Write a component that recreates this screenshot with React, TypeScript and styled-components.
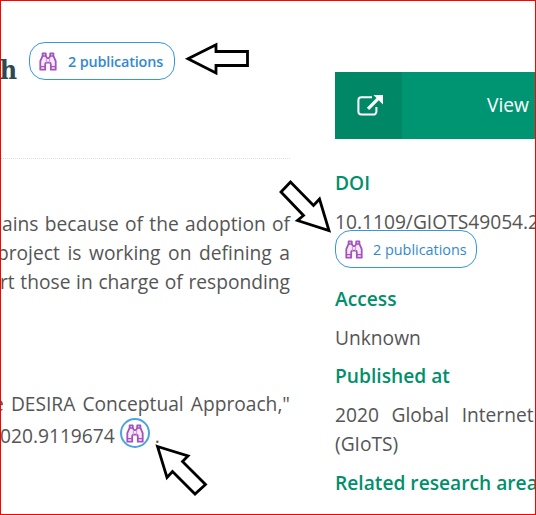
import React from "react";
import styled, { createGlobalStyle } from "styled-components";

const GlobalStyle = createGlobalStyle`
  *, *::before, *::after { box-sizing: border-box; }
  body { margin: 0; background: #fff; }
`;

const Frame = styled.div`
  position: relative;
  width: 536px;
  height: 515px;
  border: 1px solid #ff0000;
  overflow: hidden;
  display: grid;
  grid-template-columns: 289px 300px;
  column-gap: 45px;
  background: #fff;
  color: #555;
  font-family: "Open Sans", sans-serif;
  font-size: 19.2px;
  line-height: 29px;
`;

const Main = styled.main`
  min-width: 0;
`;

const TitleRow = styled.header`
  display: flex;
  align-items: flex-start;
  height: 157px;
  padding-top: 41px;
`;

const Title = styled.h1`
  display: flex;
  justify-content: flex-end;
  width: 16px;
  margin: 13px 12px 0 0;
  color: #2f4a4f;
  font: bold 26.5px/29px "DejaVu Serif Condensed", "DejaVu Serif", serif;
  font-stretch: semi-condensed;
`;

const Divider = styled.div`
  height: 1px;
  background: repeating-linear-gradient(90deg, #ddd 0 1px, #fff 1px 2px);
`;

const Line = styled.div<{ $bleed?: number }>`
  margin-left: ${(p) => -(p.$bleed ?? 0)}px;
  text-align: justify;
  text-align-last: justify;
  white-space: nowrap;
`;

const Abstract = styled.section`
  margin-top: 50px;
`;

const Citation = styled.section`
  margin-top: 93px;
`;

const CitationEnd = styled.div`
  display: flex;
  align-items: flex-start;
  margin-left: -1px;
  padding-top: 3px;
`;

const Chip = styled.span<{ $width: number; $strong?: boolean }>`
  display: inline-flex;
  align-items: center;
  flex: none;
  width: ${(p) => p.$width}px;
  height: 38px;
  padding-left: 9px;
  gap: ${(p) => (p.$strong ? 11 : 10)}px;
  border: 1px solid #3498db;
  border-radius: 16px;
  background: #fff;
  color: #3489ce;
  font-size: 14.4px;
  font-weight: ${(p) => (p.$strong ? 550 : 400)};
  letter-spacing: ${(p) => (p.$strong ? "-0.15px" : "0")};
  line-height: 20px;
  white-space: nowrap;
`;

const ChipText = styled.span`
  padding-top: 2px;
`;

const RoundBadge = styled.span`
  display: flex;
  align-items: center;
  justify-content: center;
  width: 30px;
  height: 30px;
  margin: -3px 5px 0 5px;
  border: 2px solid #4ba3df;
  border-radius: 50%;
  background: #fff;
`;

const Side = styled.aside`
  padding-top: 71px;
`;

const ViewButton = styled.div`
  display: flex;
  height: 67px;
  background: #009572;
  color: #fff;
  line-height: 66px;
`;

const ButtonIcon = styled.span`
  display: flex;
  align-items: center;
  justify-content: center;
  width: 67px;
  padding: 0 0 2px 2px;
  background: #008766;
`;

const ButtonLabel = styled.span`
  padding-left: 85px;
`;

const Label = styled.h2<{ $top: number }>`
  margin: ${(p) => p.$top}px 0 0;
  color: #008f6b;
  font-size: 19.2px;
  font-weight: 600;
  line-height: 29px;
  white-space: nowrap;
`;

const Value = styled.p`
  margin: 10px 0 0;
  white-space: nowrap;
`;

const Doi = styled(Value)`
  height: 48px;
`;

const DoiChip = styled.span`
  display: flex;
  margin-top: -6px;
`;

const Venue = styled(Value)`
  word-spacing: 7.6px;
`;

const Annotations = styled.svg`
  position: absolute;
  left: -1px;
  top: -1px;
  pointer-events: none;
`;

const Binoculars = () => (
  <svg width="18" height="19" viewBox="0 0 18 19" fill="none" stroke="#a552bd" strokeWidth="1.8" strokeLinejoin="round">
    <path
      d="M3.6 1.4h3.2v2.4L8 6.2h2l1.2-2.4V1.4h3.2v2.4l2.3 5.4v8.5h-4.9v-5.5c0-1-.6-1.5-1.5-1.5H7.7c-.9 0-1.5.5-1.5 1.5v5.5H1.3V9.2l2.3-5.4z"
      fill="#f5eaf8"
    />
    <path d="M3.6 4h3.2M11.2 4h3.2M1.3 14.6h4.9M11.8 14.6h4.9" strokeWidth="1.4" />
    <path d="M7.4 6.2v4.5M10.6 6.2v4.5" stroke="#cb9bd9" strokeWidth="1.1" />
  </svg>
);

const ExternalLink = () => (
  <svg width="28" height="24" viewBox="0 0 28 24" fill="none">
    <path d="M16 4.2H5.4a3 3 0 0 0-3 3v11.4a3 3 0 0 0 3 3h12a3 3 0 0 0 3-3V14" stroke="#fff" strokeWidth="2" />
    <path d="M12 15.8L23.2 4.6" stroke="#fff" strokeWidth="3.2" />
    <path d="M17.5 2H27v9.5z" fill="#fff" />
  </svg>
);

export default function App() {
  return (
    <>
      <GlobalStyle />
      <Frame>
        <Main>
          <TitleRow>
            <Title>h</Title>
            <Chip $width={146} $strong>
              <Binoculars />
              <ChipText>2 publications</ChipText>
            </Chip>
          </TitleRow>
          <Divider />
          <Abstract>
            <Line $bleed={-1}>ains because of the adoption of</Line>
            <Line $bleed={4}>project is working on defining a</Line>
            <Line $bleed={1}>rt those in charge of responding</Line>
          </Abstract>
          <Citation>
            <Line $bleed={8}>e DESIRA Conceptual Approach,"</Line>
            <CitationEnd>
              020.9119674
              <RoundBadge>
                <Binoculars />
              </RoundBadge>
              .
            </CitationEnd>
          </Citation>
        </Main>
        <Side>
          <ViewButton>
            <ButtonIcon>
              <ExternalLink />
            </ButtonIcon>
            <ButtonLabel>View</ButtonLabel>
          </ViewButton>
          <Label $top={29}>DOI</Label>
          <Doi>
            10.1109/GIOTS49054.2020
            <DoiChip>
              <Chip $width={142}>
                <Binoculars />
                <ChipText>2 publications</ChipText>
              </Chip>
            </DoiChip>
          </Doi>
          <Label $top={29}>Access</Label>
          <Value>Unknown</Value>
          <Label $top={9}>Published at</Label>
          <Venue>
            2020 Global Internet
            <br />
            (GIoTS)
          </Venue>
          <Label $top={10}>Related research areas</Label>
        </Side>
        <Annotations width="536" height="515" viewBox="0 0 536 515" fill="#fff" stroke="#000" strokeWidth="2.8">
          <polygon points="188,58.8 216,44.8 216,51.5 247.5,51.5 247.5,65.5 216,65.5 216,73" />
          <polygon points="290.5,182 281,192 303.5,215.5 297.5,220.5 329,230.5 319.5,199 313.5,205.5" />
          <polygon points="157.5,446.5 188,456 182.5,461.5 205.5,484.5 195,494 172.5,471.5 167,477.5" />
        </Annotations>
      </Frame>
    </>
  );
}
